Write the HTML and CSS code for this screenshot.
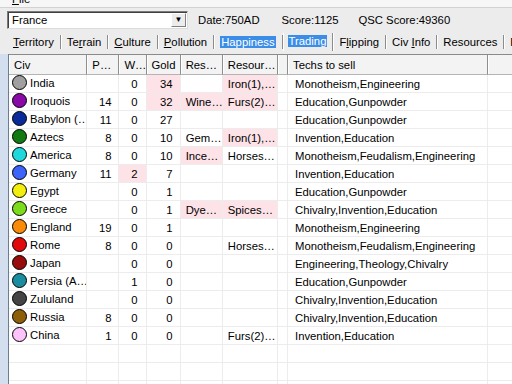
FILE: index.html
```html
<!DOCTYPE html>
<html lang="en">
<head>
    <meta charset="UTF-8">
    <title>Trading</title>
    <link rel="stylesheet" href="styles.css">
</head>
<body>
    <div class="menubar"><span class="menu-item"><u>F</u>ile</span></div>
    <div class="toolbar">
        <div class="combo">
            <span class="combo-text">France</span>
            <span class="combo-btn">&#9660;</span>
        </div>
        <span class="stat date">Date:750AD</span>
        <span class="stat score">Score:1125</span>
        <span class="stat qsc">QSC Score:49360</span>
    </div>
    <div class="tabs">
        <span class="tab"><u>T</u>erritory</span>
        <span class="tab">Te<u>r</u>rain</span>
        <span class="tab"><u>C</u>ulture</span>
        <span class="tab"><u>P</u>ollution</span>
        <span class="tab"><span class="hl">Happiness</span></span>
        <span class="tab active"><span class="hl">Trading</span></span>
        <span class="tab">F<u>l</u>ipping</span>
        <span class="tab">Civ <u>I</u>nfo</span>
        <span class="tab">Resources</span>
        <span class="tab">F</span>
    </div>
    <div class="panel">
        <div class="strip"></div>
        <div class="grid-wrap">
            <table class="grid">
                <colgroup>
                    <col class="c-civ"><col class="c-p"><col class="c-w"><col class="c-gold">
                    <col class="c-res"><col class="c-resour"><col class="c-blank"><col class="c-techs"><col class="c-last">
                </colgroup>
                <thead>
                    <tr>
                        <th>Civ</th><th>P…</th><th>W…</th><th>Gold</th><th>Res…</th><th>Resour…</th><th></th><th>Techs to sell</th><th></th>
                    </tr>
                </thead>
                <tbody id="civ-rows"></tbody>
            </table>
        </div>
    </div>

    <script>
        const civs = [
            { name: "India", color: "#a0a0a0", p: "", w: "0", gold: "34", res: "", resour: "Iron(1),…", techs: "Monotheism,Engineering", pink: ["gold", "resour"] },
            { name: "Iroquois", color: "#8a0aa8", p: "14", w: "0", gold: "32", res: "Wine…", resour: "Furs(2)…", techs: "Education,Gunpowder", pink: ["gold", "res", "resour"] },
            { name: "Babylon (…", color: "#0a2a9a", p: "11", w: "0", gold: "27", res: "", resour: "", techs: "Education,Gunpowder", pink: [] },
            { name: "Aztecs", color: "#137a13", p: "8", w: "0", gold: "10", res: "Gem…", resour: "Iron(1),…", techs: "Invention,Education", pink: ["resour"] },
            { name: "America", color: "#1ed8dc", p: "8", w: "0", gold: "10", res: "Ince…", resour: "Horses…", techs: "Monotheism,Feudalism,Engineering", pink: ["res"] },
            { name: "Germany", color: "#3c64f8", p: "11", w: "2", gold: "7", res: "", resour: "", techs: "Invention,Education", pink: ["w"] },
            { name: "Egypt", color: "#f2ee10", p: "", w: "0", gold: "1", res: "", resour: "", techs: "Education,Gunpowder", pink: [] },
            { name: "Greece", color: "#7cdc1c", p: "", w: "0", gold: "1", res: "Dye…", resour: "Spices…", techs: "Chivalry,Invention,Education", pink: ["res", "resour"] },
            { name: "England", color: "#fa8a0a", p: "19", w: "0", gold: "1", res: "", resour: "", techs: "Monotheism,Engineering", pink: [] },
            { name: "Rome", color: "#e00a0a", p: "8", w: "0", gold: "0", res: "", resour: "Horses…", techs: "Monotheism,Feudalism,Engineering", pink: [] },
            { name: "Japan", color: "#980c0c", p: "", w: "0", gold: "0", res: "", resour: "", techs: "Engineering,Theology,Chivalry", pink: [] },
            { name: "Persia (A…", color: "#1a8ea0", p: "", w: "1", gold: "0", res: "", resour: "", techs: "Education,Gunpowder", pink: [] },
            { name: "Zululand", color: "#444444", p: "", w: "0", gold: "0", res: "", resour: "", techs: "Chivalry,Invention,Education", pink: [] },
            { name: "Russia", color: "#8e5e08", p: "8", w: "0", gold: "0", res: "", resour: "", techs: "Chivalry,Invention,Education", pink: [] },
            { name: "China", color: "#fcc4fa", p: "1", w: "0", gold: "0", res: "", resour: "Furs(2)…", techs: "Invention,Education", pink: [] }
        ];

        function cell(row, key, cls) {
            const pink = row.pink.includes(key) ? ' pink' : '';
            return `<td class="${cls}${pink}">${row[key]}</td>`;
        }

        function renderRows() {
            const body = document.getElementById('civ-rows');
            let html = '';
            civs.forEach(row => {
                html += `<tr>
                    <td class="civ"><span class="dot" style="background-color: ${row.color}"></span>${row.name}</td>
                    ${cell(row, 'p', 'num')}
                    ${cell(row, 'w', 'num w')}
                    ${cell(row, 'gold', 'num')}
                    ${cell(row, 'res', 'txt')}
                    ${cell(row, 'resour', 'txt')}
                    <td></td>
                    <td class="txt techs">${row.techs}</td>
                    <td></td>
                </tr>`;
            });
            for (let i = 0; i < 3; i++) {
                html += '<tr>' + '<td></td>'.repeat(9) + '</tr>';
            }
            body.innerHTML = html;
        }

        renderRows();
    </script>
</body>
</html>
```

FILE: styles.css
```css
body, html {
    margin: 0;
    padding: 0;
    height: 384px;
    overflow: hidden;
    background-color: #ececec;
    font-family: "Liberation Sans", Arial, sans-serif;
    font-size: 11.3px;
    color: #000000;
}
.menubar {
    height: 7px;
    overflow: hidden;
    background-color: #f6f6f6;
    border-bottom: 1px solid #d2d2d2;
    display: flex;
    align-items: flex-end;
    padding-left: 12px;
}
.menu-item {
    line-height: 12px;
    margin-bottom: 2px;
}
.toolbar {
    display: flex;
    align-items: center;
    height: 24px;
    padding-left: 7px;
}
.combo {
    width: 181px;
    height: 18px;
    box-sizing: border-box;
    background-color: #ffffff;
    border: 1px solid #7a7a7a;
    border-right-color: #dcdcdc;
    border-bottom-color: #dcdcdc;
    box-shadow: inset 1px 1px 0 #404040;
    display: flex;
    align-items: center;
}
.combo-text {
    flex-grow: 1;
    padding-left: 4px;
}
.combo-btn {
    width: 15px;
    height: 14px;
    margin-right: 1px;
    background-color: #ececec;
    border-left: 1px solid #ffffff;
    border-top: 1px solid #ffffff;
    border-right: 1px solid #808080;
    border-bottom: 1px solid #808080;
    box-sizing: border-box;
    font-size: 8px;
    line-height: 12px;
    text-align: center;
}
.stat {
    white-space: nowrap;
}
.date {
    margin-left: 10px;
}
.score {
    margin-left: 22px;
}
.qsc {
    margin-left: 20px;
}
.tabs {
    display: flex;
    align-items: center;
    height: 20px;
    padding-left: 7px;
    white-space: nowrap;
}
.tab {
    padding: 0 6px 0 6px;
    line-height: 14px;
    border-right: 1px solid #8c8c8c;
    box-shadow: 1px 0 0 #ffffff;
}
.tab.active {
    align-self: flex-start;
    margin-top: 1px;
    border-left: 1px solid #ffffff;
    padding: 1px 5px 3px 4px;
}
.hl {
    background-color: #3b8de8;
    color: #ffffff;
    padding: 0 1px;
}
.panel {
    display: flex;
    height: 331px;
    margin-top: 2px;
}
.strip {
    width: 9px;
    background-color: #d3deee;
    border-right: 1px solid #6e7c90;
}
.grid-wrap {
    flex-grow: 1;
    background-color: #ffffff;
    border-top: 1px solid #8a8a8a;
    overflow: hidden;
}
.grid {
    table-layout: fixed;
    border-collapse: separate;
    border-spacing: 0;
    width: 560px;
}
.c-civ { width: 78px; }
.c-p { width: 32px; }
.c-w { width: 27px; }
.c-gold { width: 34px; }
.c-res { width: 42px; }
.c-resour { width: 55px; }
.c-blank { width: 10px; }
.c-techs { width: 199px; }
.c-last { width: 81px; }
.grid th {
    height: 19px;
    padding: 0 0 0 5px;
    font-weight: normal;
    text-align: left;
    background-color: #f3f3f3;
    border-right: 1px solid #8e8e8e;
    border-bottom: 1px solid #b4b4b4;
    box-shadow: inset 1px 0 0 #ffffff;
    white-space: nowrap;
    overflow: hidden;
}
.grid td {
    height: 17px;
    padding: 0;
    border-right: 1px solid #ececec;
    border-bottom: 1px solid #ececec;
    white-space: nowrap;
    overflow: hidden;
}
.grid td.num {
    text-align: right;
    padding-right: 7px;
}
.grid td.w {
    padding-right: 8px;
}
.grid td.txt {
    padding-left: 5px;
}
.grid td.techs {
    padding-left: 7px;
}
.grid td.civ {
    padding-left: 3px;
}
.grid td.pink {
    background-color: #fde3e7;
}
.dot {
    display: inline-block;
    width: 13px;
    height: 13px;
    border-radius: 50%;
    border: 1px solid #000000;
    vertical-align: middle;
    margin-right: 3px;
    margin-top: -2px;
}
```
